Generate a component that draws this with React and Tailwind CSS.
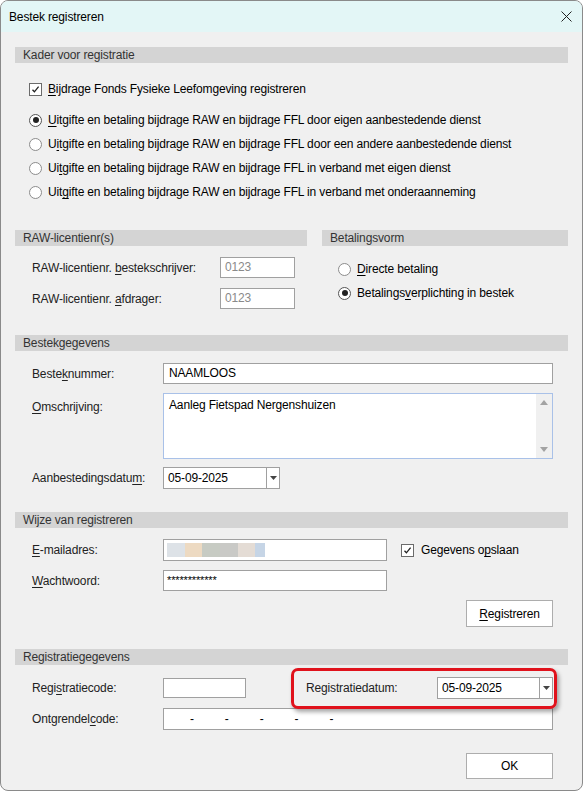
import React from 'react';

const U = ({ children }) => <span className="underline decoration-1 underline-offset-2">{children}</span>;

const Bar = ({ title }) => (
  <div className="h-[16px] bg-[#d4d4d4] pl-[8px] text-[12px] leading-[16px] text-[#333]">{title}</div>
);

const Check = () => (
  <span className="w-[13px] h-[13px] shrink-0 border border-[#6b6b6b] bg-white flex items-center justify-center">
    <svg width="9" height="9" viewBox="0 0 9 9">
      <path d="M1.5 4.8 L3.4 6.8 L7.6 1.6" stroke="#222" strokeWidth="1.3" fill="none" />
    </svg>
  </span>
);

const Radio = ({ on }) => (
  <span
    className={
      'w-[13px] h-[13px] shrink-0 rounded-full border bg-white flex items-center justify-center ' +
      (on ? 'border-[#555]' : 'border-[#8c8c8c]')
    }
  >
    {on && <span className="w-[6px] h-[6px] rounded-full bg-[#222]" />}
  </span>
);

const Arrow = () => (
  <svg width="7" height="4" viewBox="0 0 7 4">
    <path d="M0 0 H7 L3.5 4 Z" fill="#444" />
  </svg>
);

const Combo = ({ value, className }) => (
  <div className={'h-[22px] border border-[#a0a0a0] bg-white flex ' + className}>
    <div className="flex-1 pl-[4px] leading-[20px] text-black">{value}</div>
    <div className="w-[13px] border-l border-[#a0a0a0] flex items-center justify-center">
      <Arrow />
    </div>
  </div>
);

const RadioRow = ({ on, children }) => (
  <div className="h-[24px] flex items-center gap-[6px]">
    <Radio on={on} />
    <span>{children}</span>
  </div>
);

export default function App() {
  return (
    <div className="w-[583px] h-[791px] border border-[#8a8a8a] rounded-[8px] overflow-hidden bg-[#f0f0f0] flex flex-col text-[12px] tracking-[-0.15px] text-black font-['Segoe_UI','Liberation_Sans',Arial,sans-serif]">
      {/* title bar */}
      <div className="h-[31px] shrink-0 bg-[#e3f6f6] flex items-center justify-between pl-[8px] pr-[10px]">
        <span>Bestek registreren</span>
        <svg width="11" height="11" viewBox="0 0 11 11">
          <path d="M0.5 0.5 L10.5 10.5 M10.5 0.5 L0.5 10.5" stroke="#222" strokeWidth="1" />
        </svg>
      </div>

      <div className="px-[14px] pt-[15px] flex flex-col">
        {/* Kader */}
        <Bar title="Kader voor registratie" />
        <div className="pl-[14px] mt-[16px] h-[20px] flex items-center gap-[6px]">
          <Check />
          <span><U>B</U>ijdrage Fonds Fysieke Leefomgeving registreren</span>
        </div>
        <div className="pl-[14px] mt-[9px] flex flex-col">
          <RadioRow on><U>U</U>itgifte en betaling bijdrage RAW en bijdrage FFL door eigen aanbestedende dienst</RadioRow>
          <RadioRow>U<U>i</U>tgifte en betaling bijdrage RAW en bijdrage FFL door een andere aanbestedende dienst</RadioRow>
          <RadioRow>Ui<U>t</U>gifte en betaling bijdrage RAW en bijdrage FFL in verband met eigen dienst</RadioRow>
          <RadioRow>Uit<U>g</U>ifte en betaling bijdrage RAW en bijdrage FFL in verband met onderaanneming</RadioRow>
        </div>

        {/* RAW + Betalingsvorm */}
        <div className="mt-[26px] flex items-start gap-[15px]">
          <div className="w-[292px] flex flex-col">
            <Bar title="RAW-licentienr(s)" />
            <div className="mt-[11px] h-[21px] flex items-center">
              <span className="w-[205px] pl-[17px] text-[#222]">RAW-licentienr. <U>b</U>estekschrijver:</span>
              <div className="w-[75px] h-[21px] border border-[#a0a0a0] bg-white pl-[4px] leading-[19px] text-[#8a8a8a]">0123</div>
            </div>
            <div className="mt-[10px] h-[21px] flex items-center">
              <span className="w-[205px] pl-[17px] text-[#222]">RAW-licentienr. <U>a</U>fdrager:</span>
              <div className="w-[75px] h-[21px] border border-[#a0a0a0] bg-white pl-[4px] leading-[19px] text-[#8a8a8a]">0123</div>
            </div>
          </div>
          <div className="flex-1 flex flex-col">
            <Bar title="Betalingsvorm" />
            <div className="mt-[11px] pl-[16px] flex flex-col">
              <RadioRow><U>D</U>irecte betaling</RadioRow>
              <RadioRow on>Betalings<U>v</U>erplichting in bestek</RadioRow>
            </div>
          </div>
        </div>

        {/* Bestekgegevens */}
        <div className="mt-[26px]">
          <Bar title="Bestekgegevens" />
        </div>
        <div className="mt-[12px] h-[21px] flex items-center pr-[15px]">
          <span className="w-[148px] pl-[17px] text-[#222]">Beste<U>k</U>nummer:</span>
          <div className="flex-1 h-[21px] border border-[#a0a0a0] bg-white pl-[5px] leading-[19px]">NAAMLOOS</div>
        </div>
        <div className="mt-[9px] flex items-start pr-[15px]">
          <span className="w-[148px] pl-[17px] pt-[5px] text-[#222]"><U>O</U>mschrijving:</span>
          <div className="flex-1 h-[66px] border border-[#a9c1e8] bg-white flex">
            <div className="flex-1 pl-[5px] pt-[2px]">Aanleg Fietspad Nergenshuizen</div>
            <div className="w-[16px] bg-[#f0f0f0] flex flex-col items-center justify-between py-[6px]">
              <svg width="8" height="5" viewBox="0 0 8 5"><path d="M0 5 H8 L4 0 Z" fill="#a3a3a3" /></svg>
              <svg width="8" height="5" viewBox="0 0 8 5"><path d="M0 0 H8 L4 5 Z" fill="#a3a3a3" /></svg>
            </div>
          </div>
        </div>
        <div className="mt-[8px] h-[22px] flex items-center">
          <span className="w-[148px] pl-[17px] text-[#222]">Aanbestedingsdatu<U>m</U>:</span>
          <Combo value="05-09-2025" className="w-[117px]" />
        </div>

        {/* Wijze van registreren */}
        <div className="mt-[23px]">
          <Bar title="Wijze van registreren" />
        </div>
        <div className="mt-[11px] h-[22px] flex items-center">
          <span className="w-[148px] pl-[17px] text-[#222]"><U>E</U>-mailadres:</span>
          <div className="w-[224px] h-[22px] border border-[#a0a0a0] bg-white flex items-center pl-[3px]">
            <span className="w-[18px] h-[14px] bg-[#dde2e7]" />
            <span className="w-[17px] h-[14px] bg-[#eddac2]" />
            <span className="w-[18px] h-[14px] bg-[#c7cbc3]" />
            <span className="w-[18px] h-[14px] bg-[#c9c9c6]" />
            <span className="w-[17px] h-[14px] bg-[#e4dcd5]" />
            <span className="w-[10px] h-[14px] bg-[#c6d5e6]" />
          </div>
          <div className="ml-[14px] flex items-center gap-[7px]">
            <Check />
            <span>Gegevens o<U>p</U>slaan</span>
          </div>
        </div>
        <div className="mt-[9px] h-[21px] flex items-center">
          <span className="w-[148px] pl-[17px] text-[#222]"><U>W</U>achtwoord:</span>
          <div className="w-[224px] h-[21px] border border-[#a0a0a0] bg-white pl-[3px] leading-[19px] text-[11px]">************</div>
        </div>
        <div className="mt-[9px] flex justify-end pr-[15px]">
          <div className="w-[87px] h-[27px] border border-[#adadad] bg-white flex items-center justify-center">
            <span><U>R</U>egistreren</span>
          </div>
        </div>

        {/* Registratiegegevens */}
        <div className="mt-[22px]">
          <Bar title="Registratiegegevens" />
        </div>
        <div className="mt-[12px] h-[22px] flex items-center pr-[15px]">
          <span className="w-[148px] pl-[17px] text-[#222]">Regi<U>s</U>tratiecode:</span>
          <div className="w-[83px] h-[20px] border border-[#a0a0a0] bg-white" />
          <div className="relative ml-[60px] flex-1 flex items-center">
            <div className="absolute left-[-15px] right-[-4px] top-[-9px] bottom-[-10px] rounded-[7px] border-[3px] border-[#e0121c] shadow-[2px_3px_4px_rgba(0,0,0,0.35)]" />
            <span className="w-[131px] text-[#222]">Registratiedatum:</span>
            <Combo value="05-09-2025" className="flex-1" />
          </div>
        </div>
        <div className="mt-[9px] h-[22px] flex items-center pr-[15px]">
          <span className="w-[148px] pl-[17px] text-[#222]">Ontgrendel<U>c</U>ode:</span>
          <div className="flex-1 h-[22px] border border-[#a0a0a0] bg-white flex items-center pl-[26px] gap-[31px]">
            <span>-</span>
            <span>-</span>
            <span>-</span>
            <span>-</span>
            <span>-</span>
          </div>
        </div>
        <div className="mt-[23px] flex justify-end pr-[15px]">
          <div className="w-[87px] h-[26px] border border-[#adadad] bg-white flex items-center justify-center">
            OK
          </div>
        </div>
      </div>
    </div>
  );
}
